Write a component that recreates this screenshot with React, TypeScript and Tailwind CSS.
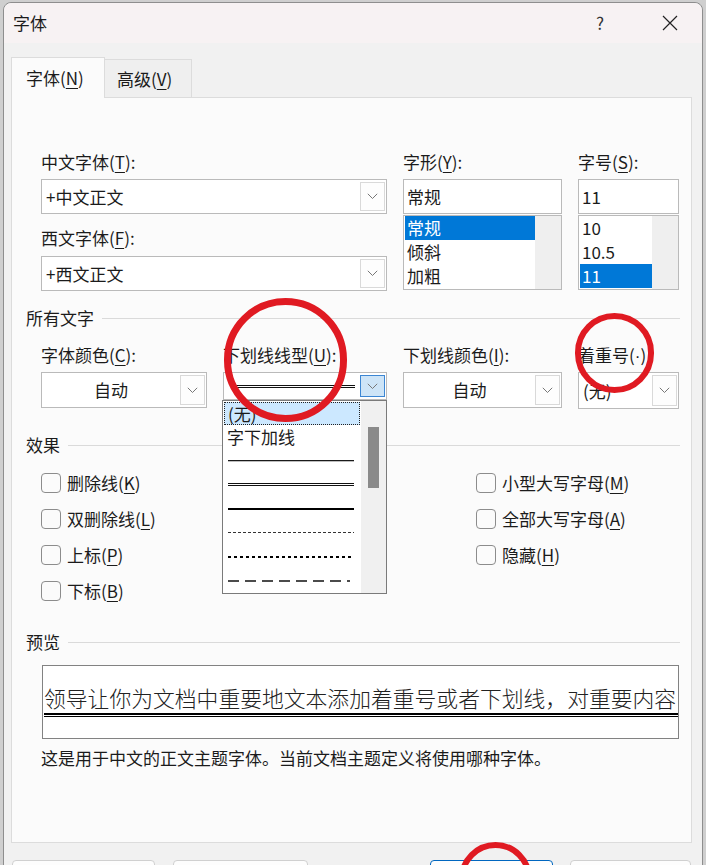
import { ReactNode } from "react";

const K = ({ c }: { c: string }) => (
  <span className="underline underline-offset-[3px] decoration-1">{c}</span>
);

const Chevron = () => (
  <svg width="11" height="7" viewBox="0 0 11 7" fill="none">
    <path d="M0.8 0.8 5.5 5.5 10.2 0.8" stroke="#777" strokeWidth="1" />
  </svg>
);

const ArrowBtn = ({ active }: { active?: boolean }) => (
  <div
    className={`w-[25px] my-[2px] mr-[1px] flex items-center justify-center border ${
      active ? "border-[#3c86d3] bg-[#cde4f7]" : "border-[#d9d9d9] bg-[#fdfdfd]"
    }`}
  >
    <Chevron />
  </div>
);

interface ComboProps {
  children?: ReactNode;
  center?: boolean;
  h?: string;
  active?: boolean;
}

const Combo = ({ children, center, h = "h-[35px]", active }: ComboProps) => (
  <div className={`flex ${h} border border-[#bababa] bg-white`}>
    <div className={`flex-1 flex items-center ${center ? "justify-center" : "pl-[4px]"}`}>
      {children}
    </div>
    <ArrowBtn active={active} />
  </div>
);

const ListBox = ({ items, selected }: { items: string[]; selected: number }) => (
  <div className="mt-[1px] h-[75px] border border-[#bababa] bg-white flex">
    <div className="flex-1 pl-[1px]">
      {items.map((t, i) => (
        <div
          key={t}
          className={`h-[24px] leading-[24px] pl-[2px] ${i === selected ? "bg-[#0078d7] text-white" : ""}`}
        >
          {t}
        </div>
      ))}
    </div>
    <div className="w-[26px] bg-[#efefef]" />
  </div>
);

const LineSample = ({ kind }: { kind: string }) => (
  <svg width="126" height="4" viewBox="0 0 126 4">
    {kind === "single" && (
      <>
        <rect x="0" y="1" width="126" height="1" fill="#1a1a1a" />
        <rect x="0" y="2" width="126" height="1" fill="#bdbdbd" />
      </>
    )}
    {kind === "double" && (
      <>
        <rect x="0" y="0" width="126" height="1" fill="#111" />
        <rect x="0" y="2" width="126" height="1" fill="#111" />
      </>
    )}
    {kind === "thick" && <rect x="0" y="1" width="126" height="2" fill="#000" />}
    {kind === "dash" && (
      <line x1="0" y1="1.5" x2="126" y2="1.5" stroke="#333" strokeWidth="1" strokeDasharray="3 2" />
    )}
    {kind === "dot" && (
      <line x1="0" y1="2" x2="124" y2="2" stroke="#000" strokeWidth="2" strokeDasharray="3 3" />
    )}
    {kind === "long" && (
      <line x1="0" y1="2" x2="122" y2="2" stroke="#111" strokeWidth="1.3" strokeDasharray="11 6" />
    )}
  </svg>
);

const Check = ({ children }: { children: ReactNode }) => (
  <div className="h-[36px] flex items-center gap-[6px]">
    <div className="w-[20px] h-[20px] rounded-[4px] border border-[#8c8c8c] bg-[#fbfbfb]" />
    <span>{children}</span>
  </div>
);

const Group = ({ title, mt }: { title: string; mt: string }) => (
  <div className={`${mt} h-[24px] flex items-center gap-[8px] pl-[14px] pr-[11px]`}>
    <span>{title}</span>
    <div className="flex-1 h-px bg-[#dadada]" />
  </div>
);

const App = () => {
  return (
    <div className="relative w-[706px] h-[865px] overflow-hidden bg-[#cfcfcf] pl-[3px] pr-[3px] pt-[2px] font-['Noto_Sans_CJK_SC',sans-serif] text-[17px] leading-[24px] text-[#1b1b1b]">
      <div className="h-[900px] rounded-t-[8px] border border-[#8e8e8e] bg-[#f1f1f1]">
        {/* title bar */}
        <div className="h-[40px] flex items-center pl-[9px] pr-[9px] rounded-t-[8px] bg-[#f7f2f3]">
          <span>字体</span>
          <div className="ml-auto w-[46px] flex justify-center text-[#333]">?</div>
          <div className="ml-[24px] w-[46px] flex justify-center">
            <svg width="16" height="16" viewBox="0 0 16 16">
              <path d="M1 1 15 15M15 1 1 15" stroke="#222" strokeWidth="1.2" />
            </svg>
          </div>
        </div>

        {/* tabs */}
        <div className="mt-[14px] ml-[7px] flex items-end">
          <div className="relative z-10 mb-[-1px] h-[41px] w-[94px] border border-b-0 border-[#dcdcdc] bg-[#fbfbfb] pl-[14px] flex items-center">
            字体(<K c="N" />)
          </div>
          <div className="h-[38px] w-[87px] border border-l-0 border-b-0 border-[#dcdcdc] bg-[#efefef] pl-[12px] flex items-center">
            高级(<K c="V" />)
          </div>
        </div>

        {/* panel */}
        <div className="ml-[7px] mr-[10px] h-[746px] border border-[#dcdcdc] bg-[#fbfbfb]">
          <div className="mt-[52px] pl-[29px] grid grid-cols-[346px_159px_101px] gap-x-[16px]">
            <div>
              <div>
                中文字体(<K c="T" />):
              </div>
              <div className="mt-[5px]">
                <Combo>+中文正文</Combo>
              </div>
              <div className="mt-[12px]">
                西文字体(<K c="F" />):
              </div>
              <div className="mt-[6px]">
                <Combo>+西文正文</Combo>
              </div>
            </div>
            <div>
              <div>
                字形(<K c="Y" />):
              </div>
              <div className="mt-[5px] h-[35px] border border-[#bababa] bg-white flex items-center pl-[3px]">
                常规
              </div>
              <ListBox items={["常规", "倾斜", "加粗"]} selected={0} />
            </div>
            <div>
              <div>
                字号(<K c="S" />):
              </div>
              <div className="mt-[5px] h-[35px] border border-[#bababa] bg-white flex items-center pl-[3px]">
                11
              </div>
              <ListBox items={["10", "10.5", "11"]} selected={2} />
            </div>
          </div>

          <Group title="所有文字" mt="mt-[15px]" />
          <div className="mt-[13px] pl-[29px] grid grid-cols-[166px_164px_159px_101px] gap-x-[16px]">
            <div className="h-[24px]">
              字体颜色(<K c="C" />):
            </div>
            <div className="h-[24px]">
              下划线线型(<K c="U" />):
            </div>
            <div className="h-[24px]">
              下划线颜色(<K c="I" />):
            </div>
            <div className="h-[24px] whitespace-nowrap">
              着重号(<span className="font-['Liberation_Sans',sans-serif] leading-[0]">·</span>)
            </div>

            <div className="mt-[5px]">
              <Combo center h="h-[36px]">
                自动
              </Combo>
            </div>
            <div className="mt-[5px] relative">
              <Combo h="h-[28px]" active>
                <div className="pl-[5px]">
                  <svg width="122" height="3" viewBox="0 0 122 3">
                    <rect x="0" y="0" width="122" height="1" fill="#111" />
                    <rect x="0" y="2" width="122" height="1" fill="#111" />
                  </svg>
                </div>
              </Combo>
              <div className="absolute left-[-1px] top-[28px] z-10 w-[165px] h-[194px] border border-[#7a7a7a] bg-white flex">
                <div className="flex-1 pt-[1px]">
                  <div className="h-[23px] mx-[1px] border border-dotted border-[#222] bg-[#cce8ff] pl-[3px] flex items-center">
                    (无)
                  </div>
                  <div className="h-[24px] pl-[4px] flex items-center">字下加线</div>
                  {["single", "double", "thick", "dash", "dot", "long"].map((k) => (
                    <div key={k} className="h-[24px] pl-[5px] flex items-center">
                      <LineSample kind={k} />
                    </div>
                  ))}
                </div>
                <div className="w-[25px] bg-[#f0f0f0] pt-[26px] flex justify-center">
                  <div className="w-[11px] h-[61px] bg-[#8a8a8a]" />
                </div>
              </div>
            </div>
            <div className="mt-[5px]">
              <Combo center h="h-[36px]">
                自动
              </Combo>
            </div>
            <div className="mt-[5px]">
              <Combo h="h-[37px]">(无)</Combo>
            </div>
          </div>

          <Group title="效果" mt="mt-[24px]" />
          <div className="mt-[8px] pl-[29px] flex">
            <div className="w-[435px]">
              <Check>
                删除线(<K c="K" />)
              </Check>
              <Check>
                双删除线(<K c="L" />)
              </Check>
              <Check>
                上标(<K c="P" />)
              </Check>
              <Check>
                下标(<K c="B" />)
              </Check>
            </div>
            <div>
              <Check>
                小型大写字母(<K c="M" />)
              </Check>
              <Check>
                全部大写字母(<K c="A" />)
              </Check>
              <Check>
                隐藏(<K c="H" />)
              </Check>
            </div>
          </div>

          <Group title="预览" mt="mt-[21px]" />
          <div className="mt-[11px] ml-[30px] w-[637px] h-[74px] border border-[#828282] bg-white overflow-hidden flex flex-col justify-center pl-[1px]">
            <div className="whitespace-nowrap text-[21.8px] leading-[24px] font-light text-[#222] font-['Liberation_Serif','Noto_Sans_CJK_SC',serif]">
              领导让你为文档中重要地文本添加着重号或者下划线，对重要内容
            </div>
            <div className="mt-[1px] h-[2px] w-[640px] bg-black" />
            <div className="mt-[1px] h-[1px] w-[640px] bg-black" />
          </div>
          <div className="mt-[7px] pl-[29px]">
            这是用于中文的正文主题字体。当前文档主题定义将使用哪种字体。
          </div>
        </div>

        {/* buttons */}
        <div className="mt-[17px] ml-[8px] flex">
          <div className="w-[143px] h-[32px] rounded-[4px] border border-[#d0d0d0] bg-[#fdfdfd]" />
          <div className="ml-[18px] w-[135px] h-[32px] rounded-[4px] border border-[#d0d0d0] bg-[#fdfdfd]" />
          <div className="ml-[122px] w-[123px] h-[32px] rounded-[4px] border border-[#0067c0] bg-[#fdfdfd]" />
          <div className="ml-[17px] w-[121px] h-[32px] rounded-[4px] border border-[#d0d0d0] bg-[#fdfdfd]" />
        </div>
      </div>

      {/* red annotation circles */}
      <div className="absolute left-[224px] top-[298px] w-[123px] h-[124px] rounded-full border-[7px] border-[#e01a22] z-20" />
      <div className="absolute left-[575px] top-[313px] w-[79px] h-[80px] rounded-full border-[6px] border-[#e01a22] z-20" />
      <div className="absolute left-[459px] top-[842px] w-[73px] h-[74px] rounded-full border-[6px] border-[#e01a22] z-20" />
    </div>
  );
};

export default App;
